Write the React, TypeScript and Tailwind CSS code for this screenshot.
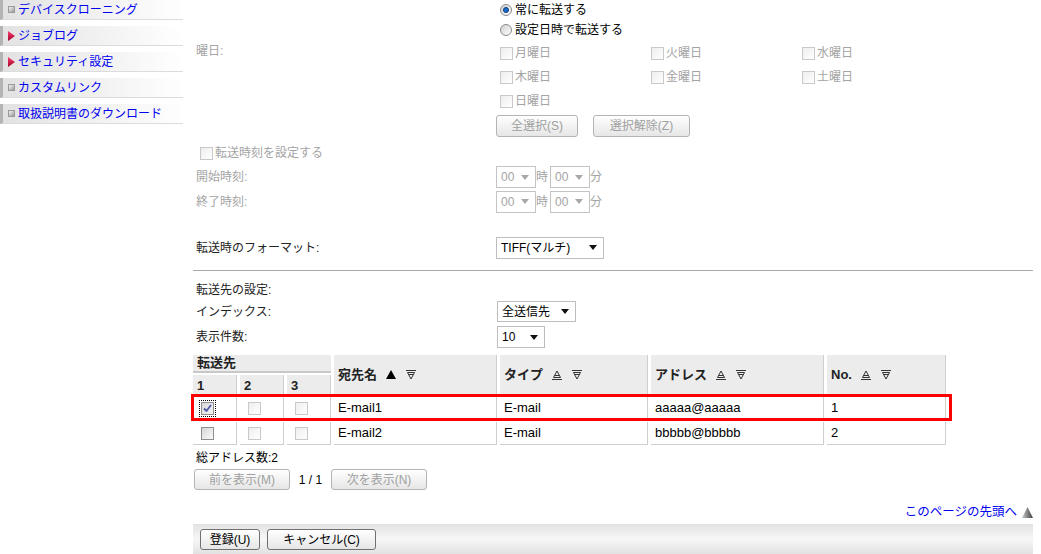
import React from "react";

type BoxState = "off" | "on" | "checked";

const sideItems = [
  { label: "デバイスクローニング", mark: "square" },
  { label: "ジョブログ", mark: "arrow" },
  { label: "セキュリティ設定", mark: "arrow" },
  { label: "カスタムリンク", mark: "square" },
  { label: "取扱説明書のダウンロード", mark: "square" },
];

const weekdays = ["月曜日", "火曜日", "水曜日", "木曜日", "金曜日", "土曜日", "日曜日"];

const rows = [
  { boxes: ["checked", "off", "off"] as BoxState[], name: "E-mail1", type: "E-mail", addr: "aaaaa@aaaaa", no: "1" },
  { boxes: ["on", "off", "off"] as BoxState[], name: "E-mail2", type: "E-mail", addr: "bbbbb@bbbbb", no: "2" },
];

function Sidebar() {
  return (
    <div className="w-[183px] shrink-0">
      {sideItems.map((item) => (
        <div
          key={item.label}
          className="h-[20px] mb-[6px] flex items-center border-l-[3px] border-l-[#b4b4b4] border-b border-b-[#dcdcdc] bg-linear-to-r from-[#e2e2e2] to-white pl-[5px] text-[#0000ee] text-[12px] leading-[14px]"
        >
          {item.mark === "square" ? (
            <span className="w-[7px] h-[7px] mr-[3px] border border-[#9a9a9a] bg-linear-to-br from-[#f4f4f4] to-[#9c9c9c]" />
          ) : (
            <svg width="7" height="10" viewBox="0 0 7 10" className="mr-[3px]">
              <defs>
                <linearGradient id="redarr" x1="0" y1="0" x2="0" y2="1">
                  <stop offset="0" stopColor="#ff4070" />
                  <stop offset="1" stopColor="#a0002a" />
                </linearGradient>
              </defs>
              <path d="M0 0 L7 5 L0 10Z" fill="url(#redarr)" />
            </svg>
          )}
          <span className="whitespace-nowrap">{item.label}</span>
        </div>
      ))}
    </div>
  );
}

function Box({ state }: { state: BoxState }) {
  if (state === "checked") {
    return (
      <span className="inline-flex outline-1 outline-dotted outline-black outline-offset-[1px]">
        <span className="w-[13px] h-[13px] border border-[#8e8e8e] bg-linear-to-br from-[#d8d8d8] to-[#f4f4f4] flex items-center justify-center">
          <svg width="11" height="11" viewBox="0 0 11 11">
            <path d="M2 5.5 L4.5 8 L9 2" fill="none" stroke="#4a5aa8" strokeWidth="1.8" />
          </svg>
        </span>
      </span>
    );
  }
  if (state === "on") {
    return <span className="inline-block w-[13px] h-[13px] border border-[#8e8e8e] bg-linear-to-br from-[#d6d6d6] to-[#fbfbfb]" />;
  }
  return <span className="inline-block w-[13px] h-[13px] border border-[#c9c9c9] bg-linear-to-br from-[#eeeeee] to-white" />;
}

function Radio({ checked }: { checked?: boolean }) {
  return (
    <span className="w-[12px] h-[12px] rounded-full border border-[#8a8a8a] bg-linear-to-br from-[#d0d0d0] to-white flex items-center justify-center">
      {checked && <span className="w-[6px] h-[6px] rounded-full bg-[#1a6fd0] border border-[#0b3a78]" />}
    </span>
  );
}

function Caret({ color }: { color: string }) {
  return (
    <svg width="8" height="5" viewBox="0 0 8 5">
      <path d="M0 0 H8 L4 5Z" fill={color} />
    </svg>
  );
}

function Select({ value, width, height = 22, disabled }: { value: string; width: number; height?: number; disabled?: boolean }) {
  return (
    <div
      style={{ width, height }}
      className={
        "flex items-center justify-between pl-[4px] pr-[6px] bg-white border text-[12px] " +
        (disabled ? "border-[#c4c4c4] text-[#a4a4a4]" : "border-[#bdbdbd] text-black")
      }
    >
      <span className="whitespace-nowrap">{value}</span>
      <Caret color={disabled ? "#a8a8a8" : "#111"} />
    </div>
  );
}

function Btn({ label, width, height = 22, disabled }: { label: string; width: number; height?: number; disabled?: boolean }) {
  return (
    <div
      style={{ width, height }}
      className={
        "flex items-center justify-center rounded-[3px] border bg-linear-to-b from-white to-[#e6e6e6] text-[12px] whitespace-nowrap " +
        (disabled ? "border-[#b4b4b4] text-[#a0a0a0]" : "border-[#707070] text-black")
      }
    >
      {label}
    </div>
  );
}

function Row({ label, h, dim, children, className = "" }: { label?: string; h: number; dim?: boolean; children?: React.ReactNode; className?: string }) {
  return (
    <div style={{ height: h }} className={"flex items-center " + className}>
      <div className={"w-[303px] shrink-0 pl-[3px] whitespace-nowrap " + (dim ? "text-[#a4a4a4]" : "text-[#222]")}>
        {label}
      </div>
      <div className="flex items-center">{children}</div>
    </div>
  );
}

function SortUp({ active }: { active?: boolean }) {
  if (active) {
    return (
      <svg width="10" height="9" viewBox="0 0 10 9">
        <path d="M5 0 L10 9 H0Z" fill="#000" />
      </svg>
    );
  }
  return (
    <svg width="10" height="10" viewBox="0 0 10 10">
      <path d="M5 1 L8.5 7.5 H1.5Z" fill="none" stroke="#333" strokeWidth="1" />
      <path d="M3 5.5 H7" stroke="#333" strokeWidth="1" />
      <path d="M0 9.5 H10" stroke="#333" strokeWidth="1" />
    </svg>
  );
}

function SortDown() {
  return (
    <svg width="10" height="10" viewBox="0 0 10 10">
      <path d="M0 0.5 H10" stroke="#333" strokeWidth="1" />
      <path d="M1.5 2.5 H8.5 L5 9Z" fill="none" stroke="#333" strokeWidth="1" />
      <path d="M3 4.5 H7" stroke="#333" strokeWidth="1" />
    </svg>
  );
}

function HeadCell({ title, active, className = "" }: { title: string; active?: boolean; className?: string }) {
  return (
    <div className={"row-span-2 bg-[#ececec] border-r border-b border-[#cfcfcf] flex items-center gap-[10px] pl-[4px] font-bold text-[13px] " + className}>
      <span className="mr-[-1px]">{title}</span>
      <SortUp active={active} />
      <SortDown />
    </div>
  );
}

function AddressTable() {
  const cell = "border-r border-b border-[#cfcfcf] flex items-center pl-[4px] text-[13px] text-black";
  return (
    <div className="relative w-[753px] grid grid-cols-[44px_44px_44px_163px_148px_173px_119px] grid-rows-[18px_20px_23px_23px] gap-x-[3px] gap-y-[2px]">
      <div className="col-span-3 bg-[#ececec] border-b-2 border-[#c8c8c8] flex items-center pl-[4px] font-bold text-[13px]">転送先</div>
      <HeadCell title="宛先名" active className="row-start-1 col-start-4" />
      <HeadCell title="タイプ" className="row-start-1 col-start-5" />
      <HeadCell title="アドレス" className="row-start-1 col-start-6" />
      <HeadCell title="No." className="row-start-1 col-start-7" />
      {["1", "2", "3"].map((n) => (
        <div key={n} className="row-start-2 bg-[#ececec] border-r border-[#cfcfcf] flex items-end pb-[1px] pl-[4px] font-bold text-[13px]">
          {n}
        </div>
      ))}
      {rows.map((r) => (
        <React.Fragment key={r.name}>
          {r.boxes.map((b, i) => (
            <div key={i} className={cell + " pl-[8px]"}>
              <Box state={b} />
            </div>
          ))}
          <div className={cell}>{r.name}</div>
          <div className={cell}>{r.type}</div>
          <div className={cell}>{r.addr}</div>
          <div className={cell}>{r.no}</div>
        </React.Fragment>
      ))}
      <div className="absolute left-[-2px] top-[39px] w-[761px] h-[27px] border-[3px] border-[#ff0000]" />
    </div>
  );
}

export default function App() {
  return (
    <div className="flex w-[1041px] h-[554px] overflow-hidden bg-white text-[12px] leading-[16px] text-[#222] font-['Liberation_Sans','Noto_Sans_CJK_JP',sans-serif]">
      <Sidebar />
      <main className="ml-[10px] w-[840px] flex flex-col">
        <Row h={20}>
          <span className="ml-[4px] mr-[3px]"><Radio checked /></span>
          <span className="text-black">常に転送する</span>
        </Row>
        <Row h={20}>
          <span className="ml-[4px] mr-[3px]"><Radio /></span>
          <span className="text-black">設定日時で転送する</span>
        </Row>

        <div className="flex mt-[2px]">
          <div className="w-[303px] shrink-0 pl-[3px] pt-[2px] text-[#a4a4a4]">曜日:</div>
          <div className="grid grid-cols-[151px_151px_151px] auto-rows-[24px] pl-[4px]">
            {weekdays.map((d) => (
              <div key={d} className="flex items-center gap-[2px] text-[#a4a4a4]">
                <Box state="off" />
                <span>{d}</span>
              </div>
            ))}
          </div>
        </div>

        <Row h={22} className="mt-[2px]">
          <Btn label="全選択(S)" width={82} disabled />
          <span className="ml-[15px]"><Btn label="選択解除(Z)" width={97} disabled /></span>
        </Row>

        <div className="h-[20px] mt-[6px] flex items-center pl-[7px] gap-[2px] text-[#a4a4a4]">
          <Box state="off" />
          <span>転送時刻を設定する</span>
        </div>

        <Row label="開始時刻:" h={24} dim className="mt-[2px]">
          <Select value="00" width={40} disabled />
          <span className="w-[14px] text-[#a4a4a4]">時</span>
          <Select value="00" width={40} disabled />
          <span className="text-[#a4a4a4]">分</span>
        </Row>
        <Row label="終了時刻:" h={24} dim className="mt-[1px]">
          <Select value="00" width={40} disabled />
          <span className="w-[14px] text-[#a4a4a4]">時</span>
          <Select value="00" width={40} disabled />
          <span className="text-[#a4a4a4]">分</span>
        </Row>

        <Row label="転送時のフォーマット:" h={22} className="mt-[23px]">
          <Select value="TIFF(マルチ)" width={108} />
        </Row>

        <div className="mt-[11px] border-t border-[#a9a9a9]" />

        <Row label="転送先の設定:" h={18} className="mt-[11px]" />
        <Row label="インデックス:" h={21} className="mt-[2px]">
          <span className="ml-[1px]"><Select value="全送信先" width={79} height={21} /></span>
        </Row>
        <Row label="表示件数:" h={22} className="mt-[4px]">
          <span className="ml-[1px]"><Select value="10" width={48} /></span>
        </Row>

        <div className="mt-[7px]">
          <AddressTable />
        </div>

        <div className="h-[16px] mt-[5px] pl-[3px] flex items-center text-black">総アドレス数:2</div>
        <div className="h-[21px] mt-[3px] flex items-center pl-[1px]">
          <Btn label="前を表示(M)" width={96} height={21} disabled />
          <span className="w-[41px] text-center text-black">1 / 1</span>
          <Btn label="次を表示(N)" width={96} height={21} disabled />
        </div>

        <div className="h-[16px] mt-[14px] flex items-center justify-end gap-[5px] text-[#0000ee] text-[12.5px]">
          <span>このページの先頭へ</span>
          <svg width="11" height="11" viewBox="0 0 11 11">
            <defs>
              <linearGradient id="topArr" x1="0" y1="0" x2="1" y2="0">
                <stop offset="0" stopColor="#c8c8c8" />
                <stop offset="1" stopColor="#404040" />
              </linearGradient>
            </defs>
            <path d="M5.5 0 L11 11 H0Z" fill="url(#topArr)" />
          </svg>
        </div>

        <div className="h-[30px] mt-[4px] flex items-start pt-[5px] pl-[7px] gap-[7px] bg-linear-to-b from-[#e2e2e2] via-[#f7f7f7] to-[#e2e2e2]">
          <Btn label="登録(U)" width={60} height={21} />
          <Btn label="キャンセル(C)" width={109} height={21} />
        </div>
      </main>
    </div>
  );
}
